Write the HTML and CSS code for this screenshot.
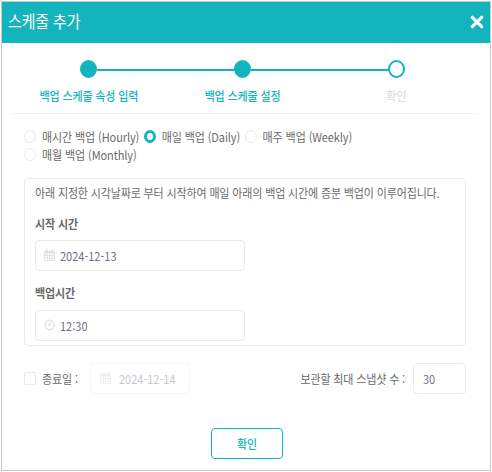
FILE: index.html
```html
<!DOCTYPE html>
<html lang="ko">
<head>
  <meta charset="UTF-8">
  <meta name="viewport" content="width=device-width, initial-scale=1.0">
  <title>스케줄 추가</title>
  <link rel="stylesheet" href="styles.css">
</head>
<body>
  <div class="modal">
    <!-- Header -->
    <div class="modal-header">
      <h2><span class="text">스케줄 추가</span></h2>
      <button class="close" aria-label="닫기">
        <svg width="14" height="14" viewBox="0 0 14 14"><path d="M2.3 2.3 L11.7 11.7 M11.7 2.3 L2.3 11.7"/></svg>
      </button>
    </div>

    <!-- Steps -->
    <div class="steps">
      <div class="step done"><i class="dot"></i><span class="text">백업 스케줄 속성 입력</span></div>
      <div class="step done"><i class="dot"></i><span class="text">백업 스케줄 설정</span></div>
      <div class="step"><i class="dot"></i><span class="text">확인</span></div>
    </div>

    <div class="modal-body">
      <div class="radios">
        <label class="radio"><i></i><span class="text">매시간 백업 (Hourly)</span></label>
        <label class="radio checked"><i></i><span class="text">매일 백업 (Daily)</span></label>
        <label class="radio"><i></i><span class="text">매주 백업 (Weekly)</span></label>
        <label class="radio"><i></i><span class="text">매월 백업 (Monthly)</span></label>
      </div>

      <div class="panel">
        <p><span class="text">아래 지정한 시각날짜로 부터 시작하여 매일 아래의 백업 시간에 증분 백업이 이루어집니다.</span></p>
        <h3><span class="text">시작 시간</span></h3>
        <div class="field">
          <svg class="icon" width="11" height="12" viewBox="0 0 11 12"><use href="#calendar"/></svg>
          <span class="text">2024-12-13</span>
        </div>
        <h3><span class="text">백업시간</span></h3>
        <div class="field">
          <svg class="icon clock" width="11" height="12" viewBox="0 0 11 12"><ellipse cx="5.5" cy="6" rx="4.4" ry="4.7"/><path d="M5.8 3.4 V6.5 H3.7"/></svg>
          <span class="text">12:30</span>
        </div>
      </div>

      <div class="options">
        <label class="end-date"><i class="checkbox"></i><span class="text">종료일 :</span></label>
        <div class="field disabled">
          <svg class="icon" width="11" height="12" viewBox="0 0 11 12"><use href="#calendar"/></svg>
          <span class="text">2024-12-14</span>
        </div>
        <span class="text snapshot-label">보관할 최대 스냅샷 수 :</span>
        <div class="field count"><span class="text">30</span></div>
      </div>
    </div>

    <div class="modal-footer">
      <button class="confirm"><span class="text">확인</span></button>
    </div>
  </div>

  <svg class="defs" width="0" height="0">
    <symbol id="calendar" viewBox="0 0 11 12">
      <path fill="currentColor" fill-rule="evenodd" d="M1 1.5H1.8V.7Q2.7-.5 3.6.7V1.5H7.4V.7Q8.3-.5 9.2.7V1.5H10Q11 1.5 11 2.5V11Q11 12 10 12H1Q0 12 0 11V2.5Q0 1.5 1 1.5ZM1 4.4V5.9H2.6V4.4ZM3.5 4.4V5.9H5.1V4.4ZM5.9 4.4V5.9H7.5V4.4ZM8.4 4.4V5.9H10V4.4ZM1 6.9V8.4H2.6V6.9ZM3.5 6.9V8.4H5.1V6.9ZM5.9 6.9V8.4H7.5V6.9ZM8.4 6.9V8.4H10V6.9ZM1 9.4V10.9H2.6V9.4ZM3.5 9.4V10.9H5.1V9.4ZM5.9 9.4V10.9H7.5V9.4ZM8.4 9.4V10.9H10V9.4Z"/>
    </symbol>
  </svg>
</body>
</html>
```
FILE: styles.css
```css
* {
  box-sizing: border-box;
}

body {
  margin: 0;
  padding: 1px;
  background: #fff;
  color: #6a6a6a;
  font-family: "Noto Sans CJK KR", sans-serif;
  font-size: 11px;
  line-height: 18px;
}

/* Slightly condensed type */
.text {
  display: inline-block;
  white-space: nowrap;
  letter-spacing: -0.14px;
  transform: translateY(-0.6px) scaleY(1.1);
}

.modal {
  width: 490px;
  height: 470px;
  border: 1px solid #c6c8ca;
}

/* Header */
.modal-header {
  display: flex;
  align-items: center;
  justify-content: space-between;
  height: 41px;
  padding: 0 6px 2px 6px;
  background: #14b4be;
  color: #fff;
}

.modal-header h2 {
  margin: 0;
  font-size: 15px;
  font-weight: 400;
}

.close {
  display: flex;
  padding: 0;
  border: 0;
  background: none;
}

.close path {
  stroke: #fff;
  stroke-width: 3.2;
  stroke-linecap: round;
}

/* Steps */
.steps {
  display: flex;
  height: 71px;
  margin: 0 11px 0 10px;
  padding: 17px 6px 0 0;
  border-bottom: 1px solid #f0f0f2;
}

.step {
  flex: 1;
  display: flex;
  flex-direction: column;
  align-items: center;
  position: relative;
  color: #ddd;
  font-weight: 500;
}

.step.done {
  color: #14b4be;
}

.dot {
  width: 17px;
  height: 18px;
  margin-bottom: 9px;
  border: 2px solid #14b4be;
  border-radius: 50%;
  background: #fff;
}

.done .dot {
  background: #14b4be;
}

.step.done::after {
  content: "";
  position: absolute;
  top: 9px;
  left: calc(50% + 8px);
  width: calc(100% - 16px);
  height: 2px;
  background: #14b4be;
}

/* Body */
.modal-body {
  padding: 14px 23px 0 22px;
}

.radios {
  display: flex;
  flex-wrap: wrap;
}

.radio {
  display: flex;
  align-items: center;
  height: 18px;
  margin-right: 4.5px;
}

.radio .text {
  letter-spacing: -0.1px;
}

.radio i {
  width: 12px;
  height: 13px;
  margin: -2px 6px 0 0;
  border: 1px solid #ebebee;
  border-radius: 50%;
}

.radio.checked i {
  border: 3.5px solid #14b4be;
}

.panel {
  width: 442px;
  height: 168px;
  margin-top: 14px;
  padding: 5px 10px;
  border: 1px solid #ebebee;
  border-radius: 4px;
}

.panel p {
  margin: 0;
  height: 18px;
}

.panel h3 {
  margin: 13px 0 7px;
  height: 18px;
  font-size: 11px;
  font-weight: 700;
}

.panel .field + h3 {
  margin-bottom: 8px;
}

.field {
  display: flex;
  align-items: center;
  width: 210px;
  height: 31px;
  padding: 0 9px 0 8px;
  border: 1px solid #ebebee;
  border-radius: 4px;
  color: #72728a;
}

.field .text {
  letter-spacing: 0;
}

.icon {
  margin: -1px 5px 0 0;
  color: #e2e2ea;
}

.clock {
  fill: none;
  stroke: currentColor;
  stroke-width: 1.5;
}

.options {
  display: flex;
  align-items: center;
  width: 442px;
  margin-top: 17px;
}

.end-date {
  display: flex;
  align-items: center;
  width: 66px;
}

.checkbox {
  width: 12px;
  height: 13px;
  margin-right: 6px;
  border: 1px solid #ebebee;
  border-radius: 1px;
}

.field.disabled {
  width: 100px;
  padding-left: 9px;
  border-color: #f6f6f8;
  color: #c8c8d0;
}

.disabled .icon {
  margin-right: 8px;
  color: #efeff3;
}

.snapshot-label {
  margin-left: auto;
  margin-right: 8px;
}

.field.count {
  width: 53px;
  padding-left: 9px;
}

/* Footer */
.modal-footer {
  display: flex;
  justify-content: center;
  padding: 34px 0 0 2px;
}

.confirm {
  width: 72px;
  height: 31px;
  padding: 0;
  border: 1px solid #14b4be;
  border-radius: 4px;
  background: #fff;
  color: #14b4be;
  font: inherit;
  font-weight: 500;
}

.defs {
  display: block;
}
```
